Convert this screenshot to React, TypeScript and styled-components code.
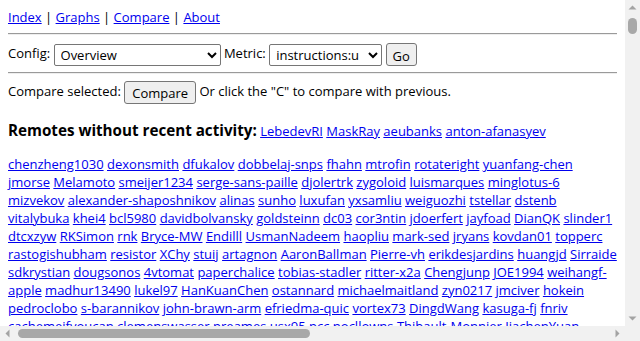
import { FC } from 'react';
import styled, { createGlobalStyle } from 'styled-components';

const GlobalStyle = createGlobalStyle`
  html,
  body {
    margin: 0;
    height: 100%;
    overflow: hidden;
  }
  body {
    font-family: "Open Sans", "Liberation Sans", sans-serif;
    font-size: 13px;
    color: #000;
  }
  a {
    color: #0000ee;
  }
`;

const stale = ['LebedevRI', 'MaskRay', 'aeubanks', 'anton-afanasyev'];

const remotes = [
  'chenzheng1030', 'dexonsmith', 'dfukalov', 'dobbelaj-snps', 'fhahn', 'mtrofin',
  'rotateright', 'yuanfang-chen', 'jmorse', 'Melamoto', 'smeijer1234',
  'serge-sans-paille', 'djolertrk', 'zygoloid', 'luismarques', 'minglotus-6',
  'mizvekov', 'alexander-shaposhnikov', 'alinas', 'sunho', 'luxufan', 'yxsamliu',
  'weiguozhi', 'tstellar', 'dstenb', 'vitalybuka', 'khei4', 'bcl5980',
  'davidbolvansky', 'goldsteinn', 'dc03', 'cor3ntin', 'jdoerfert', 'jayfoad',
  'DianQK', 'slinder1', 'dtcxzyw', 'RKSimon', 'rnk', 'Bryce-MW', 'Endilll',
  'UsmanNadeem', 'haopliu', 'mark-sed', 'jryans', 'kovdan01', 'topperc',
  'rastogishubham', 'resistor', 'XChy', 'stuij', 'artagnon', 'AaronBallman',
  'Pierre-vh', 'erikdesjardins', 'huangjd', 'Sirraide', 'sdkrystian', 'dougsonos',
  '4vtomat', 'paperchalice', 'tobias-stadler', 'ritter-x2a', 'Chengjunp', 'JOE1994',
  'weihangf-apple', 'madhur13490', 'lukel97', 'HanKuanChen', 'ostannard',
  'michaelmaitland', 'zyn0217', 'jmciver', 'hokein', 'pedroclobo', 's-barannikov',
  'john-brawn-arm', 'efriedma-quic', 'vortex73', 'DingdWang', 'kasuga-fj', 'fnriv',
  'cachemeifyoucan', 'clemenswasser', 'preames', 'usx95', 'pcc', 'nocllowns',
  'Thibault-Monnier', 'JiachenYuan', 'dtemirbulatov', 'arsenm', 'asb', 'nikic',
  'davemgreen', 'david-arm', 'sjoerdmeijer', 'paulwalker-arm', 'kazutakahirata',
  'jhuber6', 'Artem-B', 'shiltian', 'jrbyrnes', 'rampitec', 'bjope',
  'uweigand', 'nemanjai', 'ecnelises', 'lei137', 'amy-kwan',
];

const commits = Array.from({ length: 40 }, (_, i) => ({
  rev: (0x9f3a21c + i * 7919).toString(16),
  author: remotes[i % remotes.length],
  value: (1_000_000_000 + ((i * 104729) % 50_000_000)).toLocaleString('en-US'),
  delta: (((i * 37) % 200) / 100 - 1).toFixed(2),
}));

// the browser window's own scrollbars, drawn as part of the frame
const Scrollbar: FC<{ vertical?: boolean; start: number; size: number }> = ({
  vertical,
  start,
  size,
}) => (
  <Track $vertical={vertical}>
    <Arrow viewBox="0 0 15 15">
      <path d={vertical ? 'M3.5 9.5h8L7.5 5.5z' : 'M9.5 3.5v8L5.5 7.5z'} />
    </Arrow>
    <Rail $vertical={vertical}>
      <Thumb
        $vertical={vertical}
        style={vertical ? { marginTop: start, height: size } : { marginLeft: start, width: size }}
      />
    </Rail>
    <Arrow viewBox="0 0 15 15">
      <path d={vertical ? 'M3.5 5.5h8L7.5 9.5z' : 'M5.5 3.5v8L9.5 7.5z'} />
    </Arrow>
  </Track>
);

const App: FC = () => (
  <>
    <GlobalStyle />
    <Frame>
      <Page>
        <Nav>
          <a href="#">Index</a> | <a href="#">Graphs</a> | <a href="#">Compare</a> |{' '}
          <a href="#">About</a>
        </Nav>
        <Rule />
        <Form>
          Config:{' '}
          <ConfigSelect defaultValue="Overview">
            <option>Overview</option>
          </ConfigSelect>{' '}
          Metric:{' '}
          <MetricSelect defaultValue="instructions:u">
            <option>instructions:u</option>
          </MetricSelect>{' '}
          <Button>Go</Button>
        </Form>
        <Rule />
        <CompareRow>
          Compare selected: <Button $wide>Compare</Button> Or click the "C" to
          compare with previous.
        </CompareRow>
        <Heading>
          <HeadingTitle>Remotes without recent activity:</HeadingTitle>{' '}
          {stale.map((name) => (
            <span key={name}>
              <a href="#">{name}</a>{' '}
            </span>
          ))}
        </Heading>
        <Remotes>
          {remotes.map((name, i) => (
            <span key={name + i}>
              <a href="#">{name}</a>{' '}
            </span>
          ))}
        </Remotes>
        <Commits>
          <thead>
            <tr>
              <th>Revision</th>
              <th>Author</th>
              <th>instructions:u</th>
              <th>Change</th>
            </tr>
          </thead>
          <tbody>
            {commits.map((c) => (
              <tr key={c.rev}>
                <td>
                  <a href="#">{c.rev}</a>
                </td>
                <td>{c.author}</td>
                <td>{c.value}</td>
                <td>{c.delta}%</td>
              </tr>
            ))}
          </tbody>
        </Commits>
      </Page>
      <Scrollbar vertical start={3} size={16} />
      <Scrollbar start={3} size={292} />
      <Corner />
    </Frame>
  </>
);

export default App;

const Frame = styled.div`
  display: grid;
  grid-template-columns: 1fr 15px;
  grid-template-rows: 1fr 15px;
  height: 100vh;
  width: 100vw;
`;

const Page = styled.div`
  box-sizing: border-box;
  padding: 8px;
  overflow: hidden;
  min-width: 0;
  min-height: 0;
`;

const Track = styled.div<{ $vertical?: boolean }>`
  display: flex;
  flex-direction: ${(p) => (p.$vertical ? 'column' : 'row')};
  background: #f1f1f1;
  min-width: 0;
  min-height: 0;
`;

const Arrow = styled.svg`
  flex: 0 0 15px;
  width: 15px;
  height: 15px;
  fill: #a3a3a3;
`;

const Rail = styled.div<{ $vertical?: boolean }>`
  flex: 1 1 auto;
  display: flex;
  flex-direction: ${(p) => (p.$vertical ? 'column' : 'row')};
  align-items: center;
`;

const Thumb = styled.div<{ $vertical?: boolean }>`
  flex: 0 0 auto;
  ${(p) => (p.$vertical ? 'width: 9px;' : 'height: 9px;')}
  background: #a8a8a8;
  border-radius: 5px;
`;

const Corner = styled.div`
  background: #f1f1f1;
`;

const Nav = styled.div`
  line-height: 18px;
`;

const Rule = styled.hr`
  margin: 6.5px 0;
  border: 0;
  border-top: 1px solid #9a9a9a;
  border-bottom: 1px solid #eeeeee;
`;

const Form = styled.form`
  height: 24px;
  line-height: 24px;
  white-space: nowrap;
`;

const Select = styled.select`
  font: inherit;
  height: 22px;
  padding: 0 2px;
  border: 1px solid #767676;
  border-radius: 2px;
  background: #fff;
  color: #000;
  vertical-align: middle;
`;

const ConfigSelect = styled(Select)`
  width: 167px;
`;

const MetricSelect = styled(Select)`
  width: 113px;
`;

const Button = styled.button<{ $wide?: boolean }>`
  font: inherit;
  height: 23px;
  padding: 0 ${(p) => (p.$wide ? 7 : 6)}px;
  border: 1px solid #767676;
  border-radius: 3px;
  background: #efefef;
  color: #000;
  vertical-align: middle;
`;

const CompareRow = styled.div`
  height: 23px;
  line-height: 23px;
  white-space: nowrap;
`;

const Heading = styled.div`
  margin-top: 16px;
  line-height: 22px;
`;

const HeadingTitle = styled.b`
  font-size: 15.2px;
`;

const Remotes = styled.div`
  margin-top: 13px;
  line-height: 18px;
  word-wrap: break-word;
`;

const Commits = styled.table`
  margin-top: 16px;
  width: 100%;
  border-collapse: collapse;

  th,
  td {
    text-align: left;
    padding: 2px 8px;
    border-bottom: 1px solid #ddd;
  }
`;
